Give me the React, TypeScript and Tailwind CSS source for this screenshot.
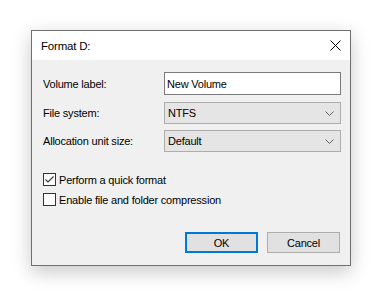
function Select({ value }: { value: string }) {
  return (
    <div className="flex h-[22px] w-[177px] items-center justify-between border border-[#adadad] bg-[#e5e5e5] pl-[3px] pr-[6px]">
      <span>{value}</span>
      <svg width="9" height="5" viewBox="0 0 9 5" className="text-[#606060]">
        <path d="M0.5 0.5 L4.5 4.5 L8.5 0.5" fill="none" stroke="currentColor" strokeWidth="1" />
      </svg>
    </div>
  );
}

function Checkbox({ checked, label }: { checked?: boolean; label: string }) {
  return (
    <div className="flex h-[13px] items-center gap-[3px]">
      <div className="flex h-[13px] w-[13px] items-center justify-center border border-[#333333] bg-white">
        {checked && (
          <svg width="11" height="11" viewBox="0 0 11 11">
            <path d="M1.5 5.5 L4 8 L9.5 2.5" fill="none" stroke="#333333" strokeWidth="1.1" />
          </svg>
        )}
      </div>
      <span>{label}</span>
    </div>
  );
}

export default function App() {
  return (
    <div className="h-[296px] w-[381px] bg-white pl-[31px] pt-[30px] font-['Liberation_Sans',sans-serif] text-[11px] leading-[14px] tracking-[-0.2px] text-black">
      <div className="flex h-[236px] w-[320px] flex-col border border-[#707070] bg-[#f0f0f0] shadow-[0_6px_18px_rgba(0,0,0,0.22)]">
        {/* Title bar */}
        <div className="flex h-[29px] items-center justify-between bg-white pl-[9px] pr-[9px]">
          <span className="text-[11.5px]">Format D:</span>
          <svg width="11" height="11" viewBox="0 0 11 11">
            <path d="M0.5 0.5 L10.5 10.5 M10.5 0.5 L0.5 10.5" stroke="#000" strokeWidth="1" />
          </svg>
        </div>

        {/* Body */}
        <div className="flex flex-1 flex-col pl-[11px] pr-[9px] pt-[12px]">
          <div className="flex items-center">
            <span className="w-[121px]">Volume label:</span>
            <div className="flex h-[23px] w-[177px] items-center border border-[#7a7a7a] bg-white pl-[2px]">
              New Volume
            </div>
          </div>
          <div className="mt-[7px] flex items-center">
            <span className="w-[121px]">File system:</span>
            <Select value="NTFS" />
          </div>
          <div className="mt-[6px] flex items-center">
            <span className="w-[121px]">Allocation unit size:</span>
            <Select value="Default" />
          </div>

          <div className="mt-[21px] flex flex-col gap-[7px]">
            <Checkbox checked label="Perform a quick format" />
            <Checkbox label="Enable file and folder compression" />
          </div>

          <div className="mt-[26px] flex justify-end gap-[9px] pr-[1px]">
            <button className="h-[21px] w-[73px] border-2 border-[#0078d7] bg-[#e1e1e1]">OK</button>
            <button className="h-[21px] w-[73px] border border-[#adadad] bg-[#e1e1e1]">Cancel</button>
          </div>
        </div>
      </div>
    </div>
  );
}
